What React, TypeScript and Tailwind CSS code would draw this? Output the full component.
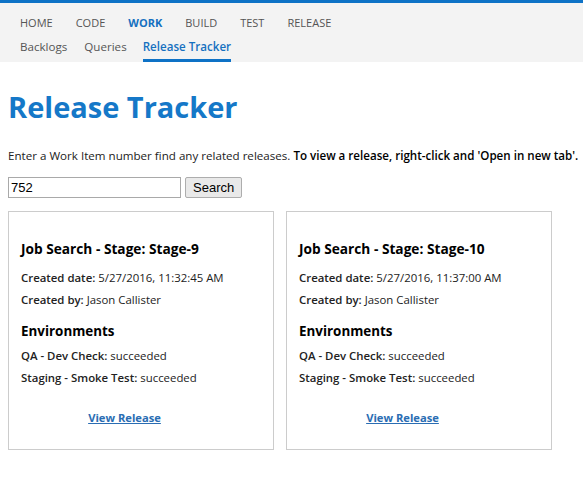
import React from 'react';

interface Release {
  title: string;
  created: string;
  createdBy: string;
  envs: { name: string; status: string }[];
}

const releases: Release[] = [
  {
    title: 'Job Search - Stage: Stage-9',
    created: '5/27/2016, 11:32:45 AM',
    createdBy: 'Jason Callister',
    envs: [
      { name: 'QA - Dev Check', status: 'succeeded' },
      { name: 'Staging - Smoke Test', status: 'succeeded' },
    ],
  },
  {
    title: 'Job Search - Stage: Stage-10',
    created: '5/27/2016, 11:37:00 AM',
    createdBy: 'Jason Callister',
    envs: [
      { name: 'QA - Dev Check', status: 'succeeded' },
      { name: 'Staging - Smoke Test', status: 'succeeded' },
    ],
  },
];

const hubs = ['HOME', 'CODE', 'WORK', 'BUILD', 'TEST', 'RELEASE'];
const pivots = ['Backlogs', 'Queries', 'Release Tracker'];

function ReleaseCard({ release }: { release: Release }) {
  return (
    <div className="w-[266px] h-[239px] border border-[#cccccc] px-3 pt-[27px]">
      <h3 className="text-[13.7px] font-bold text-black leading-[20px]">{release.title}</h3>
      <p className="mt-[9px] text-[11.4px] leading-[20px] text-[#222]">
        <b className="font-semibold">Created date:</b> {release.created}
      </p>
      <p className="mt-[2px] text-[11.4px] leading-[20px] text-[#222]">
        <b className="font-semibold">Created by:</b> {release.createdBy}
      </p>
      <h4 className="mt-[11px] text-[13.4px] font-bold text-black leading-[20px]">Environments</h4>
      {release.envs.map((e, i) => (
        <p key={i} className={`${i === 0 ? 'mt-[5px]' : 'mt-[2px]'} text-[11.4px] leading-[20px] text-[#222]`}>
          <b className="font-semibold">{e.name}:</b> {e.status}
        </p>
      ))}
      <div className="mt-[16px] pr-[33px] text-center">
        <a href="#" className="text-[11.2px] font-bold text-[#2a6db3] underline leading-[20px]">
          View Release
        </a>
      </div>
    </div>
  );
}

export default function App() {
  return (
    <div className="min-h-[486px] bg-white font-['Open_Sans',sans-serif]">
      <div className="h-[3px] bg-[#0e72c6]" />
      <div className="bg-[#f3f3f3] h-[59px] pl-[20px]">
        <div className="flex gap-[23px] pt-[11px] text-[11px] leading-[18px] text-[#555]">
          {hubs.map((h) => (
            <span key={h} className={h === 'WORK' ? 'font-bold text-[#1570c0]' : ''}>
              {h}
            </span>
          ))}
        </div>
        <div className="flex items-start gap-[17px] mt-[6px] text-[11.6px] leading-[18px] text-[#555]">
          {pivots.map((p) => (
            <span
              key={p}
              className={
                p === 'Release Tracker'
                  ? 'font-semibold text-[#1570c0] border-b-[3px] border-[#0e72c6] pb-[3px] -ml-[1px]'
                  : ''
              }
            >
              {p}
            </span>
          ))}
        </div>
      </div>
      <div className="px-[8px]">
        <h1 className="mt-[25px] text-[29px] font-bold leading-[40px] text-[#1578c8]">Release Tracker</h1>
        <p className="mt-[21px] whitespace-nowrap text-[11.6px] leading-[16px] text-[#222]">
          Enter a Work Item number find any related releases.{' '}
          <b className="font-semibold text-black">To view a release, right-click and 'Open in new tab'.</b>
        </p>
        <div className="flex items-center gap-[4px] mt-[13px] font-['Liberation_Sans',sans-serif]">
          <input
            defaultValue="752"
            className="w-[173px] h-[21px] border border-[#a9a9a9] px-[2px] text-[13px] text-black outline-none"
          />
          <button className="h-[21px] px-[7px] border border-[#adadad] rounded-[2px] bg-[#e9e9e9] text-[13px] text-black">
            Search
          </button>
        </div>
        <div className="flex gap-[12px] mt-[13px]">
          {releases.map((r) => (
            <ReleaseCard key={r.title} release={r} />
          ))}
        </div>
      </div>
    </div>
  );
}
